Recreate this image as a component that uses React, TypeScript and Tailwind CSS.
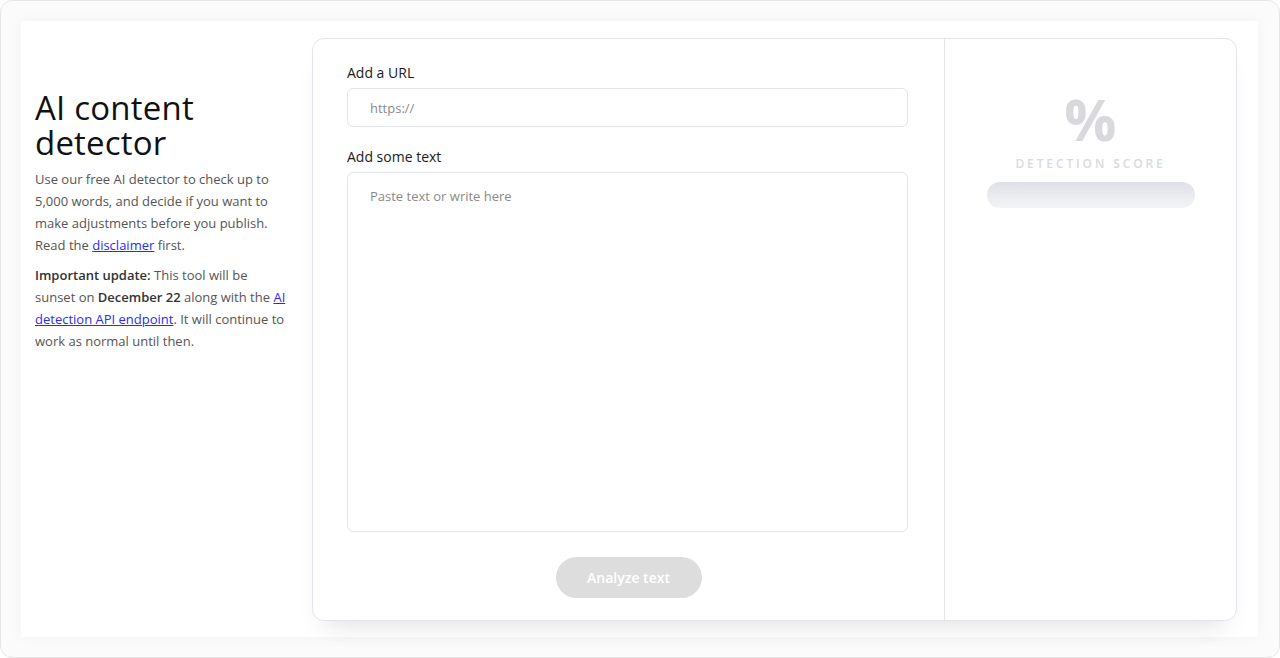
export default function App() {
  return (
    <div className="h-[658px] w-[1280px] bg-white font-['Open_Sans',sans-serif]">
      <div className="flex h-full w-full rounded-[12px] border border-[#e6e6e6] bg-[#fbfbfb] p-[20px] pr-[21px]">
        <div className="flex flex-1 bg-white pb-[16px] pl-[14px] pr-[21px] pt-[17px] shadow-[0_0_14px_rgba(0,0,0,0.04)]">
          <aside className="w-[277px] shrink-0 pr-[24px] pt-[52px]">
            <h1 className="text-[33px] font-medium leading-[35px] tracking-[0.2px] text-[#111]">AI content detector</h1>
            <p className="mt-[8px] text-[13px] leading-[22px] text-[#555]">
              Use our free AI detector to check up to 5,000 words, and decide if you want to make adjustments before
              you publish. Read the{" "}
              <a href="#" className="text-[#2a2aff] underline">
                disclaimer
              </a>{" "}
              first.
            </p>
            <p className="mt-[8px] text-[13px] leading-[22px] text-[#555]">
              <strong className="font-semibold text-[#333]">Important update:</strong> This tool will be sunset on{" "}
              <strong className="font-semibold text-[#333]">December 22</strong> along with the{" "}
              <a href="#" className="text-[#2a2aff] underline">
                AI detection API endpoint
              </a>
              . It will continue to work as normal until then.
            </p>
          </aside>

          <section className="flex flex-1 rounded-[12px] border border-[#e4e4ec] bg-white shadow-[0_16px_24px_-12px_rgba(0,0,0,0.12)]">
            <div className="flex w-[632px] shrink-0 flex-col border-r border-[#e4e4ec] px-[34px] pt-[24px]">
              <label className="text-[14px] font-medium leading-[20px] text-[#1a1a1a]">Add a URL</label>
              <input
                type="text"
                placeholder="https://"
                className="mt-[5px] h-[39px] w-[561px] rounded-[6px] border border-[#e4e4ec] px-[22px] text-[13px] text-[#333] outline-none placeholder:text-[#8a8a8a]"
              />
              <label className="mt-[20px] text-[14px] font-medium leading-[20px] text-[#1a1a1a]">Add some text</label>
              <textarea
                placeholder="Paste text or write here"
                className="mt-[5px] h-[360px] w-[561px] resize-none rounded-[6px] border border-[#e4e4ec] px-[22px] py-[13px] text-[13px] leading-[20px] text-[#333] outline-none placeholder:text-[#8a8a8a]"
              />
              <div className="mt-[25px] flex justify-center">
                <button
                  type="button"
                  className="h-[41px] w-[146px] rounded-full bg-[#dddddd] text-[14px] font-semibold text-white"
                >
                  Analyze text
                </button>
              </div>
            </div>

            <div className="flex flex-1 flex-col items-center pt-[48px]">
              <div className="text-[58px] font-bold leading-[64px] text-[#d9d9dd]">%</div>
              <div className="mt-[5px] text-[12px] font-semibold uppercase leading-[16px] tracking-[0.24em] text-[#dadade]">
                Detection score
              </div>
              <div className="mt-[10px] h-[26px] w-[208px] rounded-full bg-gradient-to-b from-[#dfe1e8] to-[#f3f4f7]" />
            </div>
          </section>
        </div>
      </div>
    </div>
  );
}
